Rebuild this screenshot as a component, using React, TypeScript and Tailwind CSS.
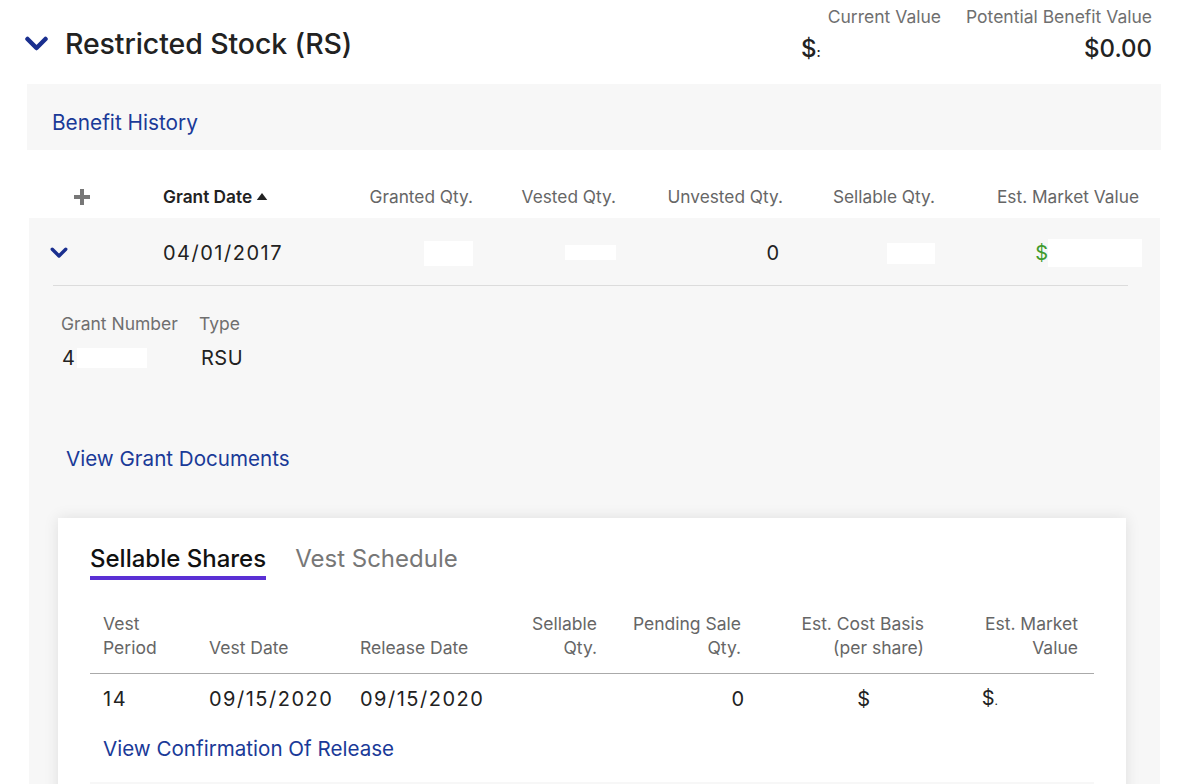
import React from "react";

const font = { fontFamily: "Inter, 'Noto Sans', sans-serif" };

function ChevronDown({ className }: { className?: string }) {
  return (
    <svg viewBox="0 0 24 16" className={className} fill="none">
      <path d="M3 3 L12 12 L21 3" stroke="currentColor" strokeWidth="4.5" strokeLinecap="round" strokeLinejoin="round" />
    </svg>
  );
}

function Mask({ className }: { className: string }) {
  return <span className={"inline-block bg-white align-middle " + className} />;
}

export default function App() {
  return (
    <div className="min-h-[784px] w-[1180px] overflow-hidden bg-white text-[#222]" style={font}>
      {/* Header */}
      <div className="flex h-[84px] items-start justify-between pr-[28px]">
        <div className="flex items-center pl-[24px] pt-[25px]">
          <ChevronDown className="h-[16px] w-[25px] text-[#1a2f8f]" />
          <h1 className="ml-[16px] text-[28.5px] font-medium leading-[38px] tracking-[-0.1px]">Restricted Stock (RS)</h1>
        </div>
        <div className="flex gap-[25px] pt-[6px]">
          <div className="flex w-[140px] flex-col items-end">
            <div className="text-[17.5px] leading-[22px] text-[#6f6f6f]">Current Value</div>
            <div className="mt-[6px] w-full text-left text-[24px] font-medium leading-[30px]">
              $<span className="text-[14px]">:</span>
            </div>
          </div>
          <div className="flex flex-col items-end">
            <div className="text-[17.5px] leading-[22px] text-[#6f6f6f]">Potential Benefit Value</div>
            <div className="mt-[6px] text-[24px] font-medium leading-[30px]">$0.00</div>
          </div>
        </div>
      </div>

      {/* Benefit History bar */}
      <div className="ml-[27px] mr-[19px] h-[66px] bg-[#f7f7f7] pl-[25px] pt-[27px]">
        <span className="text-[20.8px] leading-[24px] text-[#1a3a98]">Benefit History</span>
      </div>

      {/* Grant table */}
      <div className="ml-[29px] mr-[20px] mt-[25px]">
        <div className="flex h-[43px] items-center text-[17.3px] leading-[22px] text-[#666]">
          <div className="flex w-[134px] justify-start pl-[45px]">
            <svg viewBox="0 0 16 16" className="h-[16px] w-[16px] text-[#777]">
              <rect x="6" y="0" width="4" height="16" fill="currentColor" />
              <rect x="0" y="6" width="16" height="4" fill="currentColor" />
            </svg>
          </div>
          <div className="flex w-[170px] items-center font-semibold text-[#222]">
            Grant Date
            <svg viewBox="0 0 12 8" className="ml-[4px] h-[7px] w-[12px]"><path d="M0 8 L6 0 L12 8 Z" fill="#222" /></svg>
          </div>
          <div className="w-[140px] text-right">Granted Qty.</div>
          <div className="w-[143px] text-right">Vested Qty.</div>
          <div className="w-[167px] text-right">Unvested Qty.</div>
          <div className="w-[152px] text-right">Sellable Qty.</div>
          <div className="w-[204px] text-right">Est. Market Value</div>
        </div>

        <div className="bg-[#f7f7f7] pb-[40px]">
          <div className="flex h-[67px] items-center pt-[3px] text-[20px] leading-[24px]">
            <div className="w-[134px] pl-[21px]">
              <ChevronDown className="h-[12px] w-[18px] text-[#1a2f8f]" />
            </div>
            <div className="w-[170px] tracking-[1.5px]">04/01/2017</div>
            <div className="flex w-[140px] justify-end"><Mask className="h-[25px] w-[49px]" /></div>
            <div className="flex w-[143px] justify-end"><Mask className="mt-[-2px] h-[15px] w-[51px]" /></div>
            <div className="w-[167px] pr-[4px] text-right">0</div>
            <div className="flex w-[152px] justify-end"><Mask className="h-[21px] w-[48px]" /></div>
            <div className="flex w-[204px] items-center justify-end">
              <span className="text-[#3f9a2c]">$</span>
              <Mask className="mr-[-3px] h-[28px] w-[94px]" />
            </div>
          </div>
          <div className="ml-[24px] mr-[32px] h-px bg-[#dcdcdc]" />

          <div className="flex pl-[32px] pt-[27px]">
            <div className="w-[138px]">
              <div className="text-[17.5px] leading-[22px] text-[#6f6f6f]">Grant Number</div>
              <div className="mt-[11px] flex items-center text-[20px] leading-[24px]">
                <span className="pl-[1px]">4</span>
                <Mask className="ml-[2px] h-[20px] w-[70px]" />
              </div>
            </div>
            <div>
              <div className="text-[17.5px] leading-[22px] text-[#6f6f6f]">Type</div>
              <div className="mt-[11px] pl-[2px] text-[20px] leading-[24px] tracking-[0.5px]">RSU</div>
            </div>
          </div>

          <div className="pl-[37px] pt-[77px] text-[20.6px] leading-[24px] text-[#1a3a98]">View Grant Documents</div>

          {/* Card */}
          <div className="ml-[29px] mr-[34px] mt-[47px] bg-white px-[32px] pt-[26px] shadow-[0_0_14px_rgba(0,0,0,0.10)]">
            <div className="flex items-start gap-[29px]">
              <div className="flex flex-col">
                <span className="text-[24px] font-medium leading-[30px] text-[#111]">Sellable Shares</span>
                <span className="mt-[2px] h-[4px] w-full bg-[#5a2fd4]" />
              </div>
              <span className="text-[24px] leading-[30px] text-[#777]">Vest Schedule</span>
            </div>

            <div className="mt-[32px] flex text-[17.5px] leading-[24px] text-[#666]">
              <div className="w-[119px] pl-[13px]">Vest<br />Period</div>
              <div className="flex w-[151px] items-end">Vest Date</div>
              <div className="flex w-[140px] items-end">Release Date</div>
              <div className="w-[97px] text-right">Sellable<br />Qty.</div>
              <div className="w-[144px] text-right">Pending Sale<br />Qty.</div>
              <div className="w-[183px] text-right">Est. Cost Basis<br />(per share)</div>
              <div className="w-[154px] text-right">Est. Market<br />Value</div>
            </div>
            <div className="mt-[13px] h-px bg-[#aaa]" />

            <div className="flex h-[50px] items-center text-[20px] leading-[24px]">
              <div className="w-[119px] pl-[13px] tracking-[1.5px]">14</div>
              <div className="w-[151px] tracking-[1.5px]">09/15/2020</div>
              <div className="w-[140px] tracking-[1.5px]">09/15/2020</div>
              <div className="w-[97px]" />
              <div className="mr-[-3px] w-[147px] text-right">0</div>
              <div className="w-[180px] text-right">$<span className="inline-block w-[51px]" /></div>
              <div className="w-[157px] text-right">$<span className="text-[12px]">.</span><span className="inline-block w-[80px]" /></div>
            </div>

            <div className="pl-[13px] pt-[13px] text-[20.6px] leading-[24px] text-[#1a3a98]">View Confirmation Of Release</div>
            <div className="mt-[21px] h-[40px] bg-[#f7f7f7]" />
          </div>
        </div>
      </div>
    </div>
  );
}
